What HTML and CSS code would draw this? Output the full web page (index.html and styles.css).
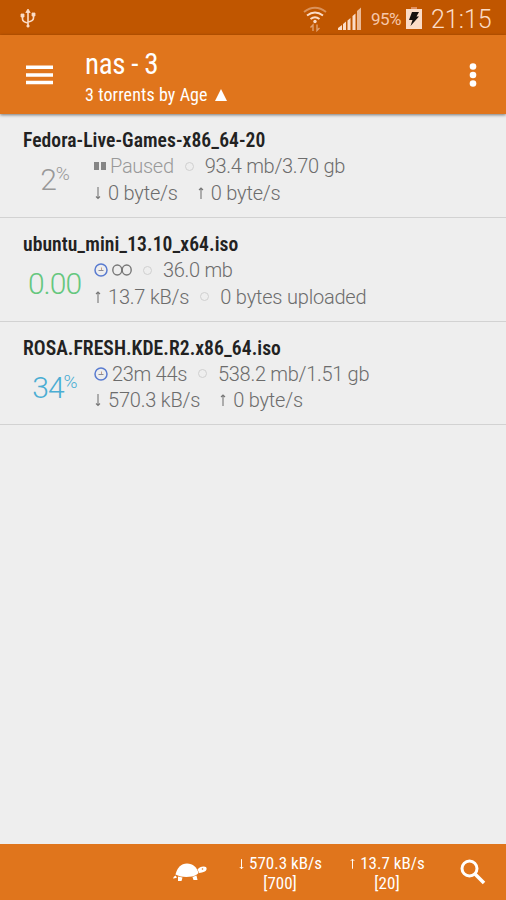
FILE: index.html
```html
<!DOCTYPE html>
<html lang="en">
<head>
    <meta charset="UTF-8">
    <meta name="viewport" content="width=device-width, initial-scale=1.0">
    <title>nas - 3</title>
    <link rel="stylesheet" href="styles.css">
</head>
<body>
    <div class="status-bar">
        <svg class="usb" width="16" height="22" viewBox="0 0 16 22" fill="none" stroke="currentColor" stroke-width="1.6">
            <path d="M8 3v15M2.500 8v3q0 3 5.500 4M13.500 7v3q0 3-5.500 4"/>
            <path d="M8 1l2.200 3.500H5.800zM1 6h3v3H1zM12 5h3v3h-3zM7 17h2v2H7z" fill="currentColor" stroke-width=".8"/>
        </svg>
        <svg class="wifi" width="24" height="26" viewBox="0 0 24 26" fill="none" stroke="currentColor" stroke-width="2">
            <path d="M1 6q11-8.500 22 0" opacity=".45"/>
            <path d="M4 9.500q8-6 16 0M7.500 13q4.500-3.500 9 0"/>
            <circle cx="12" cy="15.500" r="1.700" fill="currentColor" stroke="none"/>
            <path d="M10 25v-6l-2.500 2.500M14 18.500v6l2.500-2.500" stroke-width="1.400" opacity=".55"/>
        </svg>
        <svg class="signal" width="24" height="24" viewBox="0 0 24 24" fill="currentColor">
            <path d="M0 23v-2l4-3v5zM5 23v-6l3-2.500V23zM9.500 23v-9.500l3-2.500v12zM14.500 23V9l3-2.500V23z"/>
            <path d="M19 23V4l4-3.500V23z" opacity=".75"/>
        </svg>
        <span class="battery-level">95%</span>
        <svg class="battery" width="16" height="24" viewBox="0 0 16 24">
            <path d="M5 0h6v3H5z" fill="#e08f61"/>
            <path d="M0 2h16v20H0z" fill="#fbdcc7"/>
            <path d="M6 5h7l-2.500 4.500H13L4.500 19l2-6H3z" fill="#17110d"/>
        </svg>
        <span class="clock">21:15</span>
    </div>

    <header class="app-bar">
        <svg class="menu" width="27" height="20" viewBox="0 0 27 20" fill="#fff">
            <path d="M0 .5h27v3.500H0zM0 8.200h27v3.500H0zM0 15.800h27v3.500H0z"/>
        </svg>
        <div class="heading">
            <h1>nas - 3</h1>
            <p><span class="sort-label">3 torrents by Age</span><svg class="sort" width="12" height="12" viewBox="0 0 12 12"><path d="M6 0l6 12H0z" fill="#fff"/></svg></p>
        </div>
        <svg class="overflow" width="8" height="26" viewBox="0 0 8 26" fill="#fff">
            <circle cx="4" cy="4.500" r="3.300"/>
            <circle cx="4" cy="13" r="3.300"/>
            <circle cx="4" cy="21.500" r="3.300"/>
        </svg>
    </header>

    <main class="torrents">
        <section class="torrent">
            <h2>Fedora-Live-Games-x86_64-20</h2>
            <div class="progress paused">2<sup>%</sup></div>
            <div class="stats">
                <div class="line">
                    <svg class="pause" width="12" height="10" viewBox="0 0 12 10"><path d="M0 1h5v8H0zM7 1h5v8H7z" fill="#858585"/></svg>
                    <span class="muted">Paused</span><i class="dot"></i><span class="size">93.4 mb/3.70 gb</span>
                </div>
                <div class="line">
                    <svg class="arrow" width="8" height="14" viewBox="0 0 8 14"><path d="M4 1v11.500M2 10.500l2 2 2-2"/></svg>
                    <span>0 byte/s</span>
                    <svg class="arrow second" width="8" height="14" viewBox="0 0 8 14"><path d="M4 13V2M2 4l2-2 2 2"/></svg>
                    <span>0 byte/s</span>
                </div>
            </div>
        </section>

        <section class="torrent">
            <h2>ubuntu_mini_13.10_x64.iso</h2>
            <div class="progress seeding">0.00</div>
            <div class="stats">
                <div class="line">
                    <svg class="eta" width="14" height="14" viewBox="0 0 14 14" fill="none"><circle cx="7" cy="7" r="6" stroke="#597bd0" stroke-width="1.500"/><path d="M7.500 4.500v3" stroke="#c3a08a"/><path d="M4.500 7.500h5" stroke="#8a8a96"/></svg>
                    <svg class="infinity" width="20" height="12" viewBox="0 0 20 12" fill="none" stroke="#777" stroke-width="1.400"><ellipse cx="5.300" cy="6" rx="4.500" ry="5"/><ellipse cx="14.700" cy="6" rx="4.500" ry="5"/></svg>
                    <i class="dot"></i><span class="size">36.0 mb</span>
                </div>
                <div class="line">
                    <svg class="arrow" width="8" height="14" viewBox="0 0 8 14"><path d="M4 13V2M2 4l2-2 2 2"/></svg>
                    <span>13.7 kB/s</span><i class="dot"></i><span>0 bytes uploaded</span>
                </div>
            </div>
        </section>

        <section class="torrent">
            <h2>ROSA.FRESH.KDE.R2.x86_64.iso</h2>
            <div class="progress downloading">34<sup>%</sup></div>
            <div class="stats">
                <div class="line">
                    <svg class="eta" width="14" height="14" viewBox="0 0 14 14" fill="none"><circle cx="7" cy="7" r="6" stroke="#597bd0" stroke-width="1.500"/><path d="M7.500 4.500v3" stroke="#c3a08a"/><path d="M4.500 7.500h5" stroke="#8a8a96"/></svg>
                    <span class="size">23m 44s</span><i class="dot"></i><span class="size">538.2 mb/1.51 gb</span>
                </div>
                <div class="line">
                    <svg class="arrow" width="8" height="14" viewBox="0 0 8 14"><path d="M4 1v11.500M2 10.500l2 2 2-2"/></svg>
                    <span>570.3 kB/s</span>
                    <svg class="arrow second" width="8" height="14" viewBox="0 0 8 14"><path d="M4 13V2M2 4l2-2 2 2"/></svg>
                    <span>0 byte/s</span>
                </div>
            </div>
        </section>
    </main>

    <footer class="bottom-bar">
        <svg class="turtle" width="36" height="20" viewBox="0 0 36 20" fill="#fff">
            <path d="M3.500 12.500C5 6 9 1.500 15 1.500c6 0 10 4 11.500 9.500-1.500 2-4 3-6.500 3.500-6 1-12 .5-16.500-2z"/>
            <path d="M25.500 7.500C27 5.500 29 4.500 31.500 4.500c2.500 0 3.500 1.200 3 3-.5 1.800-2.500 2.500-4.500 3l-2.800.5zM20.500 15l4-1.500L25.500 18h-4zM6 14.500l4.500 1L9.500 19H6zM3.500 13.500l1.500 2q-2 1-4 1 .5-2 2.500-3z"/>
            <circle cx="30.500" cy="7" r=".8" fill="#e0751c"/>
        </svg>
        <div class="speed down">
            <div class="rate"><svg class="arrow" width="7" height="13" viewBox="0 0 8 14"><path d="M4 2v11M2 11l2 2 2-2"/></svg><span>570.3 kB/s</span></div>
            <div>[700]</div>
        </div>
        <div class="speed up">
            <div class="rate"><svg class="arrow" width="7" height="13" viewBox="0 0 8 14"><path d="M4 13V2M2 4l2-2 2 2"/></svg><span>13.7 kB/s</span></div>
            <div>[20]</div>
        </div>
        <svg class="search" width="26" height="26" viewBox="0 0 26 26" fill="none" stroke="#fff">
            <circle cx="9.500" cy="9.500" r="7.500" stroke-width="3"/>
            <path d="M15 15l9 9" stroke-width="3.500"/>
        </svg>
    </footer>
</body>
</html>
```
FILE: styles.css
```css
* {
    box-sizing: border-box;
}
body {
    margin: 0;
    height: 900px;
    display: flex;
    flex-direction: column;
    overflow: hidden;
    background-color: #eee;
    color: #6c6c6c;
    font-family: Roboto, sans-serif;
}
svg {
    display: block;
    flex: none;
}
h1, h2, p {
    margin: 0;
    font-weight: 400;
}
.status-bar {
    height: 35px;
    display: flex;
    align-items: center;
    padding: 3px 12px 0 20px;
    background-color: #c05600;
    color: #fbdcc7;
}
.wifi {
    margin-left: auto;
    margin-right: 11px;
}
.battery-level {
    width: 31px;
    margin-left: 9px;
    font-size: 17px;
    letter-spacing: -0.5px;
    color: #f6c7aa;
}
.battery {
    margin: 0 0 0 4px;
}
.clock {
    width: 63px;
    margin-left: 9px;
    font-size: 25px;
    font-weight: 350;
    white-space: nowrap;
}
.app-bar {
    height: 79px;
    display: flex;
    position: relative;
    align-items: center;
    padding: 0 29px 0 26px;
    background-color: #e0751c;
    color: #fff;
    box-shadow: 0 1px 3px rgba(0, 0, 0, 0.5);
}
.heading {
    margin-left: 32px;
    padding-top: 6px;
    font-stretch: 75%;
}
h1 {
    font-size: 29px;
    line-height: 34px;
    letter-spacing: -0.4px;
}
.heading p {
    display: flex;
    align-items: center;
    font-size: 18px;
    font-weight: 450;
    line-height: 27px;
    letter-spacing: 0.1px;
}
.sort {
    margin-left: 7px;
}
.overflow {
    margin-left: auto;
}
.torrents {
    flex: 1;
}
.torrent {
    height: 103.800px;
    display: grid;
    grid-template-columns: 71px 1fr;
    grid-template-rows: 25px 53px;
    padding: 14px 0 0 23px;
    border-bottom: 1px solid #d2d2d2;
}
h2 {
    grid-column: 1 / 3;
    font-size: 19.600px;
    line-height: 25px;
    font-weight: 650;
    font-stretch: 75%;
    letter-spacing: 0.050px;
    color: #222;
}
.progress {
    display: flex;
    justify-content: center;
    width: 63px;
    font-size: 30px;
    font-weight: 300;
    line-height: 54px;
    letter-spacing: -1px;
}
.progress sup {
    font-size: 19px;
    line-height: 42px;
}
.paused {
    color: #999;
}
.seeding {
    color: #65c77e;
}
.downloading {
    color: #4aadd3;
}
.line {
    height: 26.500px;
    display: flex;
    align-items: center;
    font-size: 20px;
    font-weight: 300;
    letter-spacing: -0.2px;
    white-space: nowrap;
}
.muted {
    color: #999;
    letter-spacing: -0.3px;
}
.size {
    letter-spacing: -0.300px;
}
.pause, .eta {
    margin-right: 4px;
}
.arrow {
    margin-right: 6px;
    fill: none;
    stroke: #777;
    stroke-width: 1.1;
}
.second {
    margin-left: 19px;
    margin-right: 6px;
}
.dot {
    width: 9px;
    height: 9px;
    margin: 0 11px;
    border: 1px solid #d0d0d0;
    border-radius: 50%;
}
.bottom-bar {
    height: 56px;
    display: flex;
    align-items: center;
    padding: 2px 0 0 172px;
    background-color: #e0751c;
    color: #fff;
}
.turtle {
    margin-bottom: 2px;
}
.speed {
    font-size: 17px;
    font-weight: 450;
    line-height: 20px;
    font-stretch: 75%;
    text-align: center;
}
.down {
    width: 86px;
    margin-left: 29px;
}
.up {
    width: 78px;
    margin-left: 25px;
}
.rate {
    display: flex;
    align-items: center;
    justify-content: center;
    white-space: nowrap;
}
.rate .arrow {
    margin-right: 4px;
    stroke: #fff;
}
.search {
    margin-left: 34px;
    margin-bottom: 2px;
}
```
